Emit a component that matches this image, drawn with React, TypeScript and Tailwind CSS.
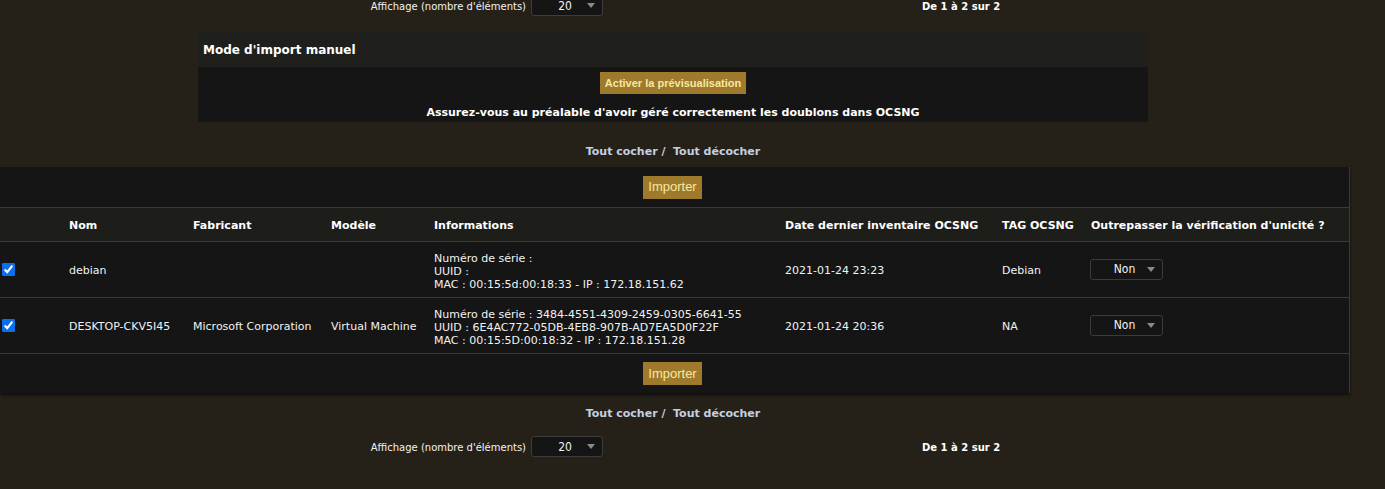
import React from "react";

const font = { fontFamily: '"DejaVu Sans", Verdana, sans-serif' };

function FakeSelect({ value, w }: { value: string; w: string }) {
  return (
    <div
      className={`relative flex items-center justify-center h-[21px] ${w} rounded-[3px] border border-[#3c3c3a] bg-[#151515] text-[12px] text-[#f2f2f2]`}
      style={{ fontFamily: '"DejaVu Sans Condensed", "DejaVu Sans", sans-serif' }}
    >
      <span className="-ml-[4px]">{value}</span>
      <span className="absolute right-[7px] top-[7px] w-0 h-0 border-l-[4px] border-r-[4px] border-t-[5px] border-l-transparent border-r-transparent border-t-[#8a8a88]" />
    </div>
  );
}

function Pager({ top }: { top?: boolean }) {
  return (
    <div className={`flex items-center h-[23px] text-[10px] text-[#f2f2f2] ${top ? "-mt-[6px]" : ""}`}>
      <div className="w-[526px] pt-[2px] text-right">Affichage (nombre d'éléments)</div>
      <div className="ml-[5px]">
        <FakeSelect value="20" w="w-[72px]" />
      </div>
      <div className="ml-[319px] pt-[2px] font-bold text-white">De 1 à 2 sur 2</div>
    </div>
  );
}

function CheckLinks() {
  return (
    <div className="text-center text-[11px] leading-[16px] font-bold text-[#c3d0e0]">
      Tout cocher / &nbsp;Tout décocher
    </div>
  );
}

function GoldButton({ children, className = "" }: { children: React.ReactNode; className?: string }) {
  return (
    <button
      className={`bg-[#a07a2c] text-[#f6e8a0] px-[5px] ${className}`}
      style={{ fontFamily: '"Liberation Sans", Arial, sans-serif' }}
    >
      {children}
    </button>
  );
}

const cols = "grid grid-cols-[69px_124px_138px_103px_351px_217px_89px_1fr] items-center";

const rows = [
  {
    nom: "debian",
    fab: "",
    mod: "",
    info: ["Numéro de série :", "UUID :", "MAC : 00:15:5d:00:18:33 - IP : 172.18.151.62"],
    date: "2021-01-24 23:23",
    tag: "Debian",
  },
  {
    nom: "DESKTOP-CKV5I45",
    fab: "Microsoft Corporation",
    mod: "Virtual Machine",
    info: [
      "Numéro de série : 3484-4551-4309-2459-0305-6641-55",
      "UUID : 6E4AC772-05DB-4EB8-907B-AD7EA5D0F22F",
      "MAC : 00:15:5D:00:18:32 - IP : 172.18.151.28",
    ],
    date: "2021-01-24 20:36",
    tag: "NA",
  },
];

export default function App() {
  return (
    <div className="min-h-[489px] bg-[#262118] overflow-hidden" style={font}>
      <div className="w-[1354px] -ml-[4px]">
        <div className="pl-[4px]">
          <Pager top />
        </div>

        {/* Manual import panel */}
        <div className="mx-auto mt-[15px] w-[950px] bg-[#151515]">
          <div className="h-[35px] flex items-center pl-[5px] bg-[#1f1f1c] text-[12px] font-bold text-white">
            Mode d'import manuel
          </div>
          <div className="h-[55px] flex flex-col items-center pt-[5px]">
            <GoldButton className="h-[22px] text-[11px] font-bold">Activer la prévisualisation</GoldButton>
            <div className="mt-[11px] text-[11px] font-bold text-white">
              Assurez-vous au préalable d'avoir géré correctement les doublons dans OCSNG
            </div>
          </div>
        </div>

        <div className="mt-[22px]">
          <CheckLinks />
        </div>

        {/* Import table */}
        <div className="mt-[7px] ml-[4px] w-[1350px] bg-[#151515] border-r border-[#3a3a38] shadow-[0_2px_3px_rgba(0,0,0,0.6)] text-[11px] text-[#f2f2f2]">
          <div className="h-[41px] flex items-center justify-center border-b border-[#3a3a38]">
            <GoldButton className="h-[23px] text-[13px] -ml-[4px]">Importer</GoldButton>
          </div>
          <div className={`${cols} h-[34px] pt-[3px] bg-[#1d1d1a] border-b border-[#3a3a38] font-bold text-white`}>
            <div />
            <div>Nom</div>
            <div>Fabricant</div>
            <div>Modèle</div>
            <div>Informations</div>
            <div>Date dernier inventaire OCSNG</div>
            <div>TAG OCSNG</div>
            <div>Outrepasser la vérification d'unicité ?</div>
          </div>
          {rows.map((r) => (
            <div key={r.nom} className={`${cols} h-[56px] border-b border-[#3a3a38]`}>
              <div className="pl-[2px] flex items-center">
                <input type="checkbox" defaultChecked className="w-[13px] h-[13px] m-0 accent-[#0b6ef0]" />
              </div>
              <div className="pt-[3px]">{r.nom}</div>
              <div className="pt-[3px]">{r.fab}</div>
              <div className="pt-[3px]">{r.mod}</div>
              <div className="pt-[3px] leading-[13px]">
                {r.info.map((l) => (
                  <div key={l}>{l}</div>
                ))}
              </div>
              <div className="pt-[3px]">{r.date}</div>
              <div className="pt-[3px]">{r.tag}</div>
              <div className="-ml-[1px] pb-[1px]">
                <FakeSelect value="Non" w="w-[73px]" />
              </div>
            </div>
          ))}
          <div className="h-[39px] flex items-center justify-center">
            <GoldButton className="h-[23px] text-[13px] -ml-[4px]">Importer</GoldButton>
          </div>
        </div>

        <div className="mt-[13px]">
          <CheckLinks />
        </div>

        <div className="mt-[13px] pl-[4px]">
          <Pager />
        </div>
      </div>
    </div>
  );
}
